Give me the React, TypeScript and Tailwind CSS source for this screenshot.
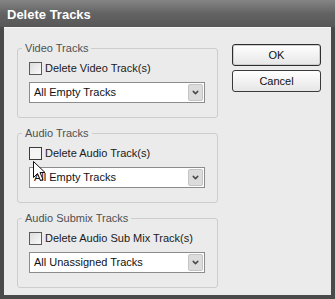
import { ChevronDown } from 'lucide-react';

const font = { fontFamily: '"Liberation Sans", Arial, sans-serif' };

interface GroupProps {
  title: string;
  label: string;
  value: string;
  hover?: boolean;
}

function Group({ title, label, value, hover }: GroupProps) {
  return (
    <fieldset className="relative border border-[#cdcdcd] rounded-[3px] pl-[11px] pr-[12px] pb-[14px]">
      <legend className="-ml-[7px] px-[3px] text-[11px] leading-[13px] text-[#505050]">{title}</legend>
      <label className="mt-[7px] flex items-center h-[13px] text-[11px] text-[#1a1a1a]">
        <span
          className={
            hover
              ? 'w-[13px] h-[13px] border border-[#3c3c3c] bg-[#f4f4f4] shrink-0'
              : 'w-[13px] h-[13px] border border-[#5a5a5a] bg-gradient-to-br from-[#dcdcdc] to-[#fafafa] shrink-0'
          }
        />
        <span className="ml-[3px]">{label}</span>
      </label>
      <div className="mt-[7px] h-[21px] flex items-center bg-white border border-[#8c8c8c] pl-[4px] pr-[1px]">
        <span className="flex-1 text-[11px] text-[#111]">{value}</span>
        <span className="w-[15px] h-[17px] flex items-center justify-center bg-[#dcdcdc] border border-[#c4c4c4] rounded-[2px]">
          <ChevronDown className="w-[9px] h-[9px] text-[#4a4a4a]" strokeWidth={4} />
        </span>
      </div>
      {hover && (
        <svg className="absolute left-[15px] top-[21px]" width="13" height="22" viewBox="0 0 13 22">
          <path
            d="M0.5 0.5 L0.5 16.5 L4.5 12.5 L7.5 19.5 L10 18.5 L7 11.5 L12 11.5 Z"
            fill="#fff"
            stroke="#111"
            strokeWidth="1"
          />
        </svg>
      )}
    </fieldset>
  );
}

export default function App() {
  return (
    <div className="w-[335px] h-[299px] flex flex-col bg-[#4a4a4a] overflow-hidden" style={font}>
      <div className="h-[27px] flex items-center pl-[7px] pt-[2px] bg-gradient-to-b from-[#858585] via-[#636363] to-[#575757]">
        <span className="text-[13px] font-bold text-white">Delete Tracks</span>
      </div>
      <div className="flex-1 mx-[4px] mb-[4px] bg-[#ebebeb] border-t border-[#f6f6f6] flex pl-[13px] pt-[14px]">
        <div className="w-[201px] flex flex-col gap-[9px]">
          <Group title="Video Tracks" label="Delete Video Track(s)" value="All Empty Tracks" />
          <Group title="Audio Tracks" label="Delete Audio Track(s)" value="All Empty Tracks" hover />
          <Group title="Audio Submix Tracks" label="Delete Audio Sub Mix Track(s)" value="All Unassigned Tracks" />
        </div>
        <div className="ml-[14px] mt-[2px] w-[89px] flex flex-col gap-[4px]">
          <button className="h-[22px] rounded-[3px] border border-[#2e2e2e] bg-gradient-to-b from-white to-[#e6e6e6] text-[11px] text-[#111] shadow-[inset_0_0_0_1px_#cfcfcf]">
            OK
          </button>
          <button className="h-[22px] rounded-[3px] border border-[#3a3a3a] bg-gradient-to-b from-white to-[#e6e6e6] text-[11px] text-[#111]">
            Cancel
          </button>
        </div>
      </div>
    </div>
  );
}
